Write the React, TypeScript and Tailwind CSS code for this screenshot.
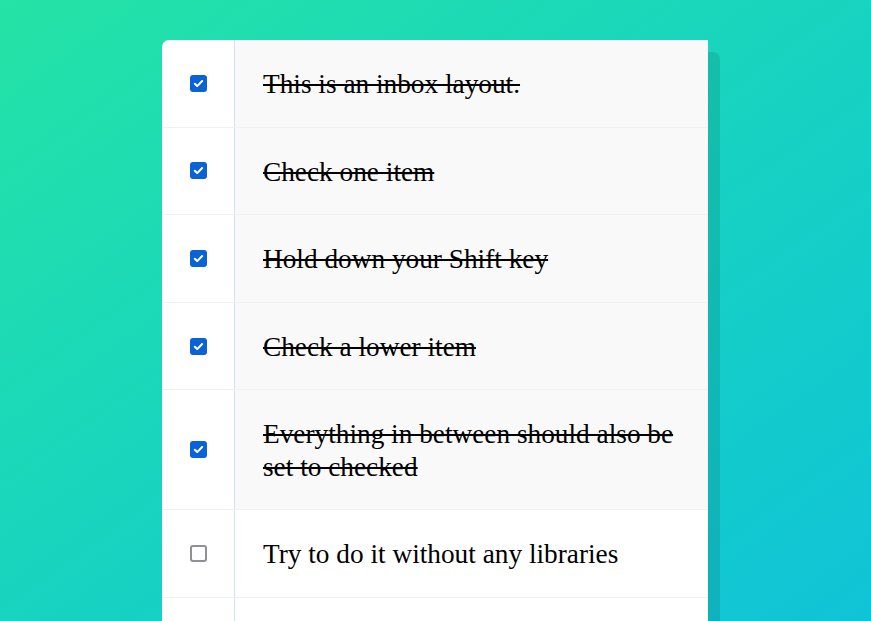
const ITEMS = [
  { text: 'This is an inbox layout.', checked: true },
  { text: 'Check one item', checked: true },
  { text: 'Hold down your Shift key', checked: true },
  { text: 'Check a lower item', checked: true },
  { text: 'Everything in between should also be set to checked', checked: true },
  { text: 'Try to do it without any libraries', checked: false },
  { text: 'Just regular JavaScript', checked: false },
  { text: 'Good Luck!', checked: false },
  { text: "Don't forget to tweet your result!", checked: false },
];

function Box({ checked }: { checked: boolean }) {
  if (checked) {
    return (
      <span className="w-[17px] h-[17px] rounded-[3px] bg-[#0b62d6] flex items-center justify-center flex-shrink-0">
        <svg width="11" height="11" viewBox="0 0 12 12" fill="none">
          <path d="M2 6.3l2.6 2.6L10 3.3" stroke="white" strokeWidth="2.2" strokeLinecap="round" strokeLinejoin="round" />
        </svg>
      </span>
    );
  }
  return <span className="w-[17px] h-[17px] rounded-[3px] border-2 border-[#8f8f94] bg-white flex-shrink-0" />;
}

export default function App() {
  return (
    <div className="h-screen overflow-hidden bg-gradient-to-br from-[#25e3a5] to-[#11c3d7]">
      <div className="w-[546px] ml-[162px] mt-[40px] bg-white rounded-[7px] shadow-[12px_12px_0_rgba(0,0,0,0.1)]">
        {ITEMS.map((item, i) => (
          <div key={i} className="flex items-center border-b border-[#f1f1f1] last:border-b-0">
            <div className="w-[72px] flex justify-center flex-shrink-0">
              <Box checked={item.checked} />
            </div>
            <p
              className={`flex-1 m-0 px-[28px] pt-[28px] pb-[26.1px] text-[27.3px] leading-[32.5px] text-black border-l border-[#d1e2ff] ${item.checked ? 'bg-[#f9f9f9] line-through' : ''}`}
              style={{ fontFamily: '"Liberation Serif", "Times New Roman", serif' }}
            >
              {item.text}
            </p>
          </div>
        ))}
      </div>
    </div>
  );
}
